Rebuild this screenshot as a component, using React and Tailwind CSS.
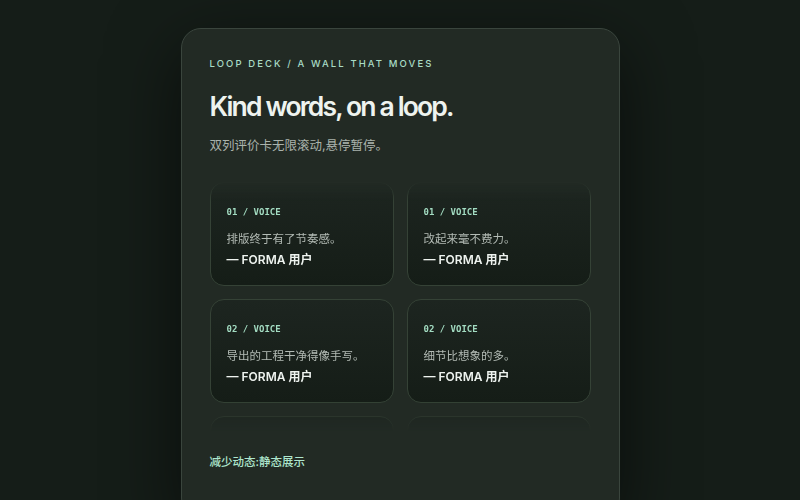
import React from "react";

const cards = [
  { n: "01", q: "排版终于有了节奏感。" },
  { n: "01", q: "改起来毫不费力。" },
  { n: "02", q: "导出的工程干净得像手写。" },
  { n: "02", q: "细节比想象的多。" },
];

function Card({ n, q }) {
  return (
    <div className="h-[104px] rounded-[14px] border border-[#354236] bg-gradient-to-b from-[#1d2520] to-[#151d17] px-[16px] pt-[23px]">
      {n && (
        <>
          <div className="text-[9px] leading-[13px] font-bold text-[#a3dcc2]" style={{ fontFamily: '"DejaVu Sans Mono", monospace' }}>
            {n} / VOICE
          </div>
          <div className="mt-[11px] text-[11.5px] leading-[18px] text-[#b3bbb5]">{q}</div>
          <div className="mt-[3px] text-[12px] leading-[18px] font-semibold text-[#eef3ef]">— FORMA 用户</div>
        </>
      )}
    </div>
  );
}

export default function App() {
  return (
    <div
      className="h-[500px] w-full overflow-hidden bg-[#151d18] pt-[28px]"
      style={{ fontFamily: 'Inter, "Noto Sans CJK SC", sans-serif' }}
    >
      <div className="mx-auto h-[490px] w-[439px] rounded-[20px] border border-[#3a453d] bg-[#222a24] px-[28px] pt-[28px] shadow-[0_20px_70px_rgba(0,0,0,0.55)]">
        <div className="text-[9.5px] leading-[14px] font-medium tracking-[0.22em] text-[#a9dcc5]">
          LOOP DECK / A WALL THAT MOVES
        </div>
        <h1 className="mt-[18px] text-[26.5px] leading-[34px] font-semibold tracking-[-0.07em] text-[#eef3ef]">
          Kind words, on a loop.
        </h1>
        <p className="mt-[14px] text-[12.5px] leading-[18px] text-[#aab3ac]">双列评价卡无限滚动,悬停暂停。</p>
        <div
          className="mt-[26px] h-[250px] overflow-hidden pt-[1px]"
          style={{
            maskImage: "linear-gradient(to bottom, transparent 0%, black 8%, black 88%, transparent 100%)",
            WebkitMaskImage: "linear-gradient(to bottom, transparent 0%, black 8%, black 88%, transparent 100%)",
          }}
        >
          <div className="grid grid-cols-2 gap-[13px]">
            {cards.map((c, i) => (
              <Card key={i} {...c} />
            ))}
            <Card />
            <Card />
          </div>
        </div>
        <div className="mt-[22px] text-[11.5px] leading-[18px] font-medium text-[#aee6cd]">减少动态:静态展示</div>
      </div>
    </div>
  );
}
